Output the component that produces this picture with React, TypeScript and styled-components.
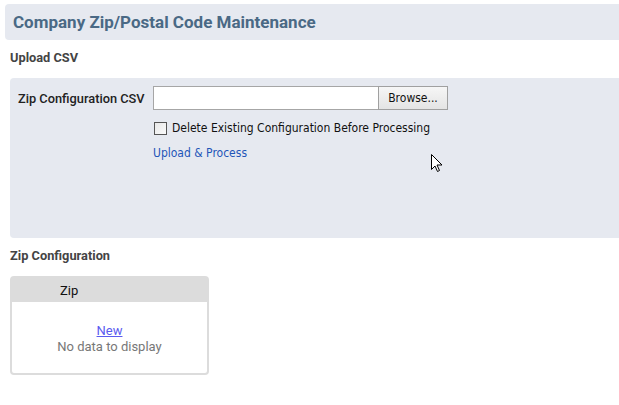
import React from "react";
import styled, { createGlobalStyle } from "styled-components";

const Global = createGlobalStyle`
  html, body { margin: 0; padding: 0; background: #ffffff; }
  body { font-family: Roboto, "Noto Sans", sans-serif; overflow: hidden; }
`;

const Page = styled.div`
  position: relative;
  width: 619px;
  height: 405px;
  padding: 4px 0 0 0;
  box-sizing: border-box;
`;

const TitleBar = styled.div`
  margin-left: 5px;
  margin-right: -6px;
  height: 36px;
  background: #e6e9f0;
  border-radius: 4px;
  display: flex;
  align-items: center;
  padding-left: 8px;
`;

const Title = styled.h1`
  margin: 0;
  font-family: Roboto, sans-serif;
  font-size: 17px;
  font-weight: 700;
  color: #4a6985;
`;

const SectionLabel = styled.div`
  margin: 9px 0 0 10px;
  height: 17px;
  display: flex;
  align-items: center;
  font-family: Roboto, sans-serif;
  font-size: 12.8px;
  font-weight: 700;
  color: #444;
`;

const Panel = styled.div`
  margin: 12px -6px 0 10px;
  height: 160px;
  background: #e6e9f0;
  border-radius: 4px;
  box-sizing: border-box;
  padding: 8px 0 0 8px;
  display: grid;
  grid-template-columns: 135px auto;
  grid-auto-rows: min-content;
  row-gap: 0;
`;

const FieldLabel = styled.div`
  font-family: Roboto, sans-serif;
  font-size: 12.8px;
  font-weight: 500;
  color: #222;
  display: flex;
  align-items: center;
  height: 24px;
`;

const FileRow = styled.div`
  display: flex;
  height: 24px;
`;

const FileInput = styled.div`
  width: 224px;
  height: 22px;
  background: #fff;
  border: 1px solid #a6a6a6;
  border-right: none;
`;

const BrowseButton = styled.button`
  width: 70px;
  height: 24px;
  border: 1px solid #a0a0a0;
  background: linear-gradient(#f6f6f6, #e4e4e4);
  font-family: "DejaVu Sans Condensed", "Liberation Sans", sans-serif;
  font-size: 12px;
  color: #111;
  padding: 0;
  margin: 0;
`;

const CheckRow = styled.label`
  grid-column: 2;
  display: flex;
  align-items: center;
  gap: 5px;
  margin-top: 11px;
  height: 14px;
  font-family: "DejaVu Sans Condensed", "Liberation Sans", sans-serif;
  font-size: 12px;
  color: #111;
`;

const CheckBox = styled.span`
  width: 11px;
  height: 11px;
  margin-left: 1px;
  border: 1px solid #555;
  background: linear-gradient(135deg, #e8e8e8, #fafafa);
`;

const ActionLink = styled.a`
  grid-column: 2;
  margin-top: 11px;
  font-family: "DejaVu Sans Condensed", "Liberation Sans", sans-serif;
  font-size: 12px;
  color: #1f56b8;
  text-decoration: none;
  line-height: 14px;
`;

const GridLabel = styled(SectionLabel)`
  margin-top: 9px;
`;

const GridBox = styled.div`
  margin: 12px 0 0 10px;
  width: 199px;
  height: 99px;
  box-sizing: border-box;
  border: 2px solid #dcdcdc;
  border-radius: 4px;
  display: flex;
  flex-direction: column;
`;

const GridHeader = styled.div`
  height: 24px;
  background: #dcdcdc;
  font-family: Roboto, sans-serif;
  font-size: 13px;
  color: #111;
  display: flex;
  align-items: center;
  padding-left: 48px;
`;

const GridBody = styled.div`
  flex: 1;
  display: flex;
  flex-direction: column;
  align-items: center;
  padding-top: 21px;
  font-family: Roboto, sans-serif;
  font-size: 13px;
  line-height: 16px;
`;

const NewLink = styled.a`
  color: #5b5bef;
  text-decoration: underline;
`;

const Empty = styled.div`
  color: #777;
`;

const Cursor = styled.svg`
  position: absolute;
  left: 431px;
  top: 154px;
`;

export default function App() {
  return (
    <>
      <Global />
      <Page>
        <TitleBar>
          <Title>Company Zip/Postal Code Maintenance</Title>
        </TitleBar>
        <SectionLabel>Upload CSV</SectionLabel>
        <Panel>
          <FieldLabel>Zip Configuration CSV</FieldLabel>
          <FileRow>
            <FileInput />
            <BrowseButton>Browse...</BrowseButton>
          </FileRow>
          <CheckRow>
            <CheckBox />
            Delete Existing Configuration Before Processing
          </CheckRow>
          <ActionLink href="#">Upload &amp; Process</ActionLink>
        </Panel>
        <GridLabel>Zip Configuration</GridLabel>
        <GridBox>
          <GridHeader>Zip</GridHeader>
          <GridBody>
            <NewLink href="#">New</NewLink>
            <Empty>No data to display</Empty>
          </GridBody>
        </GridBox>
        <Cursor width="12" height="19" viewBox="0 0 12 19">
          <path d="M0.5 0.5 L0.5 15.5 L4 12 L6.5 17.5 L8.5 16.5 L6 11 L11 11 Z" fill="#fff" stroke="#000" strokeWidth="1" />
        </Cursor>
      </Page>
    </>
  );
}
